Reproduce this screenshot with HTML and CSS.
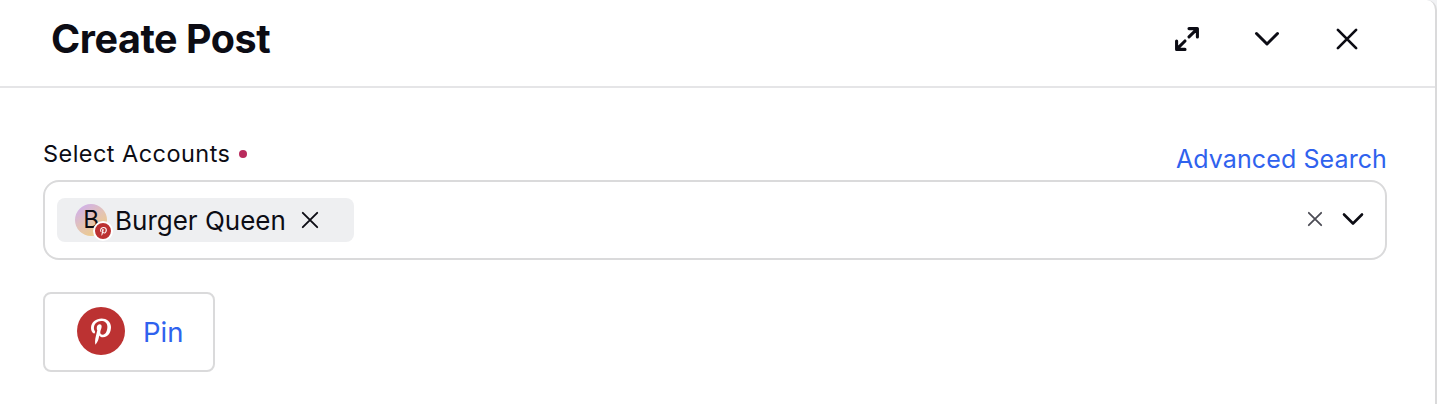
FILE: index.html
```html
<!DOCTYPE html>
<html lang="en">
<head>
  <meta charset="UTF-8">
  <title>Create Post</title>
  <link rel="stylesheet" href="styles.css">
</head>
<body>
  <svg class="sprite" width="0" height="0">
    <symbol id="pinterest" viewBox="0 0 384 512">
      <path d="M204 6.5C101.4 6.5 0 74.9 0 185.6 0 256 39.6 296 63.6 296c9.9 0 15.6-27.6 15.6-35.4 0-9.3-23.7-29.1-23.7-67.8 0-80.4 61.2-137.4 140.4-137.4 68.1 0 118.5 38.7 118.5 109.8 0 53.1-21.3 152.7-90.3 152.7-24.9 0-46.2-18-46.2-43.8 0-37.8 26.4-74.4 26.4-113.4 0-66.2-93.9-54.2-93.9 25.8 0 16.8 2.1 35.4 9.6 50.7-13.8 59.4-42 147.9-42 209.1 0 18.9 2.7 37.5 4.5 56.4 3.4 3.8 1.7 3.4 6.9 1.5 50.4-69 48.6-82.5 71.4-172.8 12.3 23.4 44.1 36 69.3 36 106.2 0 153.9-103.5 153.9-196.8C384 71.3 298.2 6.5 204 6.5z"/>
    </symbol>
  </svg>

  <div class="panel">
    <header class="header">
      <h1>Create Post</h1>
      <div class="actions">
        <button class="icon-btn" aria-label="Expand">
          <svg width="32" height="32" viewBox="0 0 32 32" stroke-width="3.1">
            <path d="M18 5.6H26.4V14M26.2 5.8L18 13.8M14 18L5.8 26.2M5.6 18V26.4H14"/>
          </svg>
        </button>
        <button class="icon-btn" aria-label="Minimize">
          <svg width="32" height="32" viewBox="0 0 32 32" stroke-width="3">
            <path d="M5.5 10.5L16 21L26.5 10.5"/>
          </svg>
        </button>
        <button class="icon-btn" aria-label="Close">
          <svg width="32" height="32" viewBox="0 0 32 32" stroke-width="2.7">
            <path d="M6.9 6.9L25.1 25.1M25.1 6.9L6.9 25.1"/>
          </svg>
        </button>
      </div>
    </header>

    <main class="content">
      <div class="label-row">
        <label class="label">Select Accounts <span class="required"></span></label>
        <a class="link">Advanced Search</a>
      </div>

      <div class="select">
        <div class="chip">
          <div class="avatar">
            B
            <span class="badge"><svg width="7" height="9"><use href="#pinterest"/></svg></span>
          </div>
          <span class="chip-name">Burger Queen</span>
          <svg class="chip-close" width="18" height="18" viewBox="0 0 18 18" stroke-width="1.9">
            <path d="M1.8 1.8L16.2 16.2M16.2 1.8L1.8 16.2"/>
          </svg>
        </div>
        <div class="select-icons">
          <svg class="clear" width="16" height="16" viewBox="0 0 16 16" stroke-width="1.8">
            <path d="M1.8 1.8L14.2 14.2M14.2 1.8L1.8 14.2"/>
          </svg>
          <svg width="22" height="16" viewBox="0 0 22 16" stroke-width="2.6">
            <path d="M2 3.5L11 12.5L20 3.5"/>
          </svg>
        </div>
      </div>

      <button class="post-type">
        <span class="pin-icon"><svg width="20" height="27"><use href="#pinterest"/></svg></span>
        <span class="post-type-name">Pin</span>
      </button>
    </main>
  </div>
</body>
</html>
```
FILE: styles.css
```css
* {
  box-sizing: border-box;
}
body {
  margin: 0;
  font-family: Inter, sans-serif;
  color: #0c0c14;
  background: #f1f2f4;
}
.sprite {
  display: block;
}
.panel {
  height: 404px;
  background: #fff;
  border-right: 2px solid #dadadb;
  border-top-right-radius: 10px;
  overflow: hidden;
}
.header {
  display: flex;
  align-items: center;
  justify-content: space-between;
  height: 88px;
  padding: 0 72px 8px 51px;
  border-bottom: 2px solid #e5e5e7;
}
h1 {
  margin: 0;
  font-size: 39.5px;
  font-weight: 700;
  line-height: 48px;
  letter-spacing: -0.45px;
}
.actions {
  display: flex;
  gap: 48px;
}
button {
  font-family: inherit;
  background: none;
  cursor: pointer;
}
.icon-btn {
  padding: 0;
  border: none;
}
svg {
  display: block;
  fill: none;
  stroke: #0c0c14;
  stroke-linecap: round;
  stroke-linejoin: round;
}
.content {
  padding: 50px 48px 0 43px;
}
.label-row {
  display: flex;
  justify-content: space-between;
  height: 42px;
}
.label {
  display: flex;
  align-items: center;
  gap: 9px;
  height: 32px;
  font-size: 23.5px;
  line-height: 30px;
  letter-spacing: 0.45px;
}
.required {
  width: 8px;
  height: 8px;
  border-radius: 50%;
  background: #b92b5d;
}
.link {
  height: 42px;
  font-size: 25px;
  line-height: 42px;
  letter-spacing: 0.1px;
  color: #2f62ee;
}
.select {
  display: flex;
  align-items: center;
  justify-content: space-between;
  height: 80px;
  padding: 0 21px 0 12px;
  border: 2px solid #dadadb;
  border-radius: 16px;
}
.chip {
  display: flex;
  align-items: center;
  width: 297px;
  height: 44px;
  padding-left: 18px;
  border-radius: 8px;
  background: #eeeff1;
}
.avatar {
  position: relative;
  width: 32px;
  height: 32px;
  border-radius: 50%;
  background: linear-gradient(145deg, #d0b0ea 10%, #e3c3b4 50%, #f0cd82 90%);
  font-size: 24px;
  line-height: 32px;
  text-align: center;
}
.badge {
  position: absolute;
  right: -6px;
  bottom: -5px;
  display: flex;
  align-items: center;
  justify-content: center;
  width: 20px;
  height: 20px;
  border: 2px solid #fff;
  border-radius: 50%;
  background: #bc3232;
}
.badge svg,
.pin-icon svg {
  fill: #fff;
  stroke: none;
}
.chip-name {
  width: 171px;
  margin-left: 8px;
  font-size: 26px;
  white-space: nowrap;
}
.chip-close {
  margin-left: 15px;
}
.select-icons {
  display: flex;
  align-items: center;
  gap: 19px;
  padding-bottom: 2px;
}
.clear {
  stroke: #4c4c55;
}
.post-type {
  display: flex;
  align-items: center;
  gap: 18px;
  width: 172px;
  height: 80px;
  margin-top: 32px;
  padding: 0 0 2px 32px;
  border: 2px solid #dadadb;
  border-radius: 8px;
  font-size: 27.5px;
  color: #2f62ee;
}
.post-type-name {
  padding-top: 2px;
}
.pin-icon {
  display: flex;
  align-items: center;
  justify-content: center;
  width: 48px;
  height: 48px;
  border-radius: 50%;
  background: #bc3232;
}
```
